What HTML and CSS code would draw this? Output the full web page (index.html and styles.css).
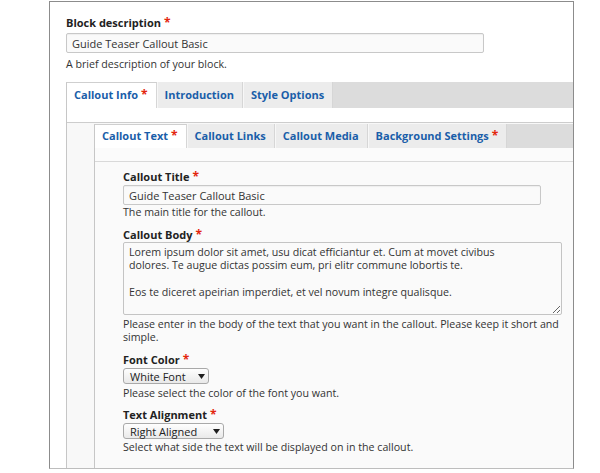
FILE: index.html
```html
<!DOCTYPE html>
<html lang="en">
<head>
<meta charset="utf-8">
<title>Block form</title>
<link rel="stylesheet" href="styles.css">
</head>
<body>
<div class="frame">
  <div class="field top-field">
    <label class="label">Block description<span class="req">*</span></label>
    <input class="text" type="text" value="Guide Teaser Callout Basic">
    <div class="desc">A brief description of your block.</div>
  </div>

  <div class="tabs outer">
    <ul class="tabbar">
      <li class="tab active">Callout Info<span class="req">*</span></li>
      <li class="tab">Introduction</li>
      <li class="tab">Style Options</li>
    </ul>
    <div class="pane outer-pane">
      <div class="group">
        <div class="tabs inner">
          <ul class="tabbar">
            <li class="tab active">Callout Text<span class="req">*</span></li>
            <li class="tab">Callout Links</li>
            <li class="tab">Callout Media</li>
            <li class="tab">Background Settings<span class="req">*</span></li>
          </ul>
          <div class="pane inner-pane">
            <div class="content">
              <div class="field f-title">
                <label class="label">Callout Title<span class="req">*</span></label>
                <input class="text" type="text" value="Guide Teaser Callout Basic">
                <div class="desc">The main title for the callout.</div>
              </div>
              <div class="field f-body">
                <label class="label">Callout Body<span class="req">*</span></label>
                <textarea class="area">Lorem ipsum dolor sit amet, usu dicat efficiantur et. Cum at movet civibus
dolores. Te augue dictas possim eum, pri elitr commune lobortis te.

Eos te diceret apeirian imperdiet, et vel novum integre qualisque.</textarea>
                <div class="desc">Please enter in the body of the text that you want in the callout. Please keep it short and simple.</div>
              </div>
              <div class="field f-color">
                <label class="label">Font Color<span class="req">*</span></label>
                <div class="select"><span>White Font</span><svg class="caret" width="7" height="5" viewBox="0 0 7 5"><path d="M0 0H7L3.5 5Z" fill="#1e1e1e"/></svg></div>
                <div class="desc">Please select the color of the font you want.</div>
              </div>
              <div class="field f-align">
                <label class="label">Text Alignment<span class="req">*</span></label>
                <div class="select"><span>Right Aligned</span><svg class="caret" width="7" height="5" viewBox="0 0 7 5"><path d="M0 0H7L3.5 5Z" fill="#1e1e1e"/></svg></div>
                <div class="desc">Select what side the text will be displayed on in the callout.</div>
              </div>
            </div>
          </div>
        </div>
      </div>
    </div>
  </div>
</div>
</body>
</html>
```

FILE: styles.css
```css
* { box-sizing: border-box; }

html, body {
  margin: 0;
  background: #fff;
}

body {
  font-family: "Open Sans", "DejaVu Sans", sans-serif;
  font-size: 10.65px;
  color: #333;
}

.frame {
  margin: 1px 0 0 49px;
  width: 525px;
  border: 1px solid #8c8c8c;
  border-bottom-color: #bdbdbd;
  padding: 13px 0 0 16px;
}

.label {
  display: block;
  font-weight: 700;
  font-size: 11px;
  line-height: 15px;
  color: #222;
}

.req {
  color: #e3260d;
  font-size: 12px;
  font-weight: 700;
  margin-left: 3px;
}

.text {
  display: block;
  width: 418px;
  height: 20px;
  margin: 1px 0 0;
  padding: 0 5px;
  border: 1px solid #c8c8c8;
  border-radius: 2px;
  background: #fafafa;
  box-shadow: inset 0 1px 1px rgba(0, 0, 0, 0.05);
  font: 11px "Open Sans", "DejaVu Sans", sans-serif;
  color: #333;
}

.top-field .text { margin-top: 3px; }

.desc {
  font-size: 10.65px;
  line-height: 13px;
  margin-top: 2px;
  color: #333;
}

.top-field .desc { margin-top: 5px; }

/* tabs */
.tabs.outer { margin-top: 11px; }

.tabbar {
  display: flex;
  list-style: none;
  margin: 0;
  padding: 0;
  background: #dcdcdc;
}

.outer > .tabbar { height: 26px; }
.inner > .tabbar { height: 24px; }

.tab {
  display: flex;
  align-items: center;
  padding: 0 8px 1px 7px;
  background: #ececec;
  border-left: 1px solid #f7f7f7;
  border-right: 1px solid #d6d6d6;
  font-weight: 700;
  font-size: 11px;
  color: #1a5ea9;
  white-space: nowrap;
}

.tab.active {
  background: #fff;
  border-left: 1px solid #c8c8c8;
  border-top: 1px solid #cfcfcf;
  padding-bottom: 2px;
}

.tab .req { margin-left: 3px; }

.pane {
  border-left: 1px solid #c6c6c6;
}

.outer-pane {
  background: #fff;
  padding-top: 14px;
}

.group {
  border-top: 1px solid #cdcdcd;
  background: #f8f8f8;
  padding: 1px 0 0 27px;
}

.inner-pane {
  background: #fbfbfb;
  padding-top: 13px;
}

.content {
  border-top: 1px solid #d9d9d9;
  background: #fafafa;
  padding: 7px 11px 14px 28px;
}

.field { margin-bottom: 8px; }
.field:last-child { margin-bottom: 0; }
.f-title { margin-bottom: 8px; }
.f-title .desc { margin-top: 1px; }
.f-body .desc { margin-top: 3px; }
.f-color { margin-bottom: 7px; }

.area {
  display: block;
  width: 100%;
  height: 73px;
  margin: 0;
  padding: 3px 5px;
  border: 1px solid #c4c4c4;
  border-radius: 2px;
  background: #fafafa;
  font: 10.65px/13.33px "Open Sans", "DejaVu Sans", sans-serif;
  color: #333;
  resize: vertical;
  overflow: hidden;
}

.select {
  display: flex;
  align-items: center;
  justify-content: space-between;
  height: 16px;
  margin-top: 1px;
  padding: 0 3px 0 6px;
  border: 1px solid #a9a9a9;
  border-radius: 3px;
  background: linear-gradient(#fefefe, #e9e9e9);
  font-size: 11px;
  color: #222;
}

.f-color .select { width: 86px; }
.f-align .select { width: 101px; }

.select + .desc { margin-top: 3px; }
.f-align .desc { margin-top: 2px; }

.caret { display: block; }
```
